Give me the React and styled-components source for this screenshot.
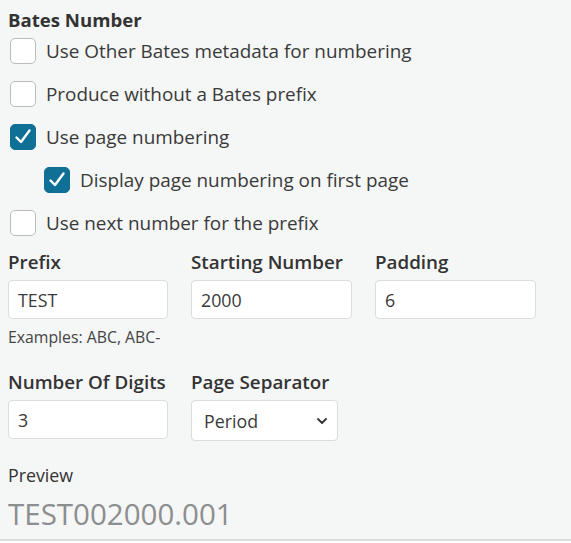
import React from "react";
import styled, { createGlobalStyle } from "styled-components";

const Global = createGlobalStyle`
  html, body { margin: 0; padding: 0; background: #fff; }
  body { font-family: "Open Sans", "Noto Sans", sans-serif; color: #333; }
`;

const Panel = styled.div`
  width: 571px;
  height: 541px;
  box-sizing: border-box;
  background: #f5f6f6;
  border-bottom: 2px solid #dcdede;
  padding: 6px 8px 0 8px;
  display: flex;
  flex-direction: column;
`;

const Heading = styled.div`
  font-size: 18.6px;
  font-weight: 700;
  line-height: 28px;
  color: #333;
`;

const CheckList = styled.div`
  display: flex;
  flex-direction: column;
  gap: 17px;
  margin-top: 4px;
`;

const CheckRow = styled.label`
  display: flex;
  align-items: center;
  gap: 10px;
  padding-left: ${(p) => (p.$indent ? 36 : 2)}px;
  font-size: 18.9px;
  line-height: 26px;
  color: #3a3a3a;
`;

const Box = styled.span`
  width: 26px;
  height: 26px;
  box-sizing: border-box;
  border-radius: 5px;
  flex: none;
  display: flex;
  align-items: center;
  justify-content: center;
  background: ${(p) => (p.$checked ? "#0f6f95" : "#fff")};
  border: 1.5px solid ${(p) => (p.$checked ? "#0f6f95" : "#b9bcbd")};
`;

const Check = ({ checked }) => (
  <Box $checked={checked}>
    {checked && (
      <svg width="20" height="20" viewBox="0 0 20 20">
        <path d="M3.5 10.5 L8 15 L16.5 3.5" fill="none" stroke="#fff" strokeWidth="2.4" strokeLinecap="round" strokeLinejoin="round" />
      </svg>
    )}
  </Box>
);

const FieldGrid = styled.div`
  display: grid;
  grid-template-columns: 160px 161px 161px;
  column-gap: 23px;
  margin-top: ${(p) => p.$mt}px;
`;

const Field = styled.div`
  display: flex;
  flex-direction: column;
`;

const Label = styled.div`
  font-size: ${(p) => (p.$regular ? 17.8 : 18.8)}px;
  font-weight: ${(p) => (p.$regular ? 400 : 600)};
  line-height: 24px;
  color: #333;
  margin-bottom: 6px;
  white-space: nowrap;
`;

const Input = styled.div`
  height: 39px;
  box-sizing: border-box;
  background: #fff;
  border: 1px solid #dadcdd;
  border-radius: 4px;
  padding: 0 9px;
  display: flex;
  align-items: center;
  font-size: 17.8px;
  color: #3a3a3a;
`;

const Select = styled(Input)`
  width: ${(p) => p.$w}px;
  height: 41px;
  justify-content: space-between;
  padding: 0 9px 0 12px;
`;

const Help = styled.div`
  font-size: 15.8px;
  line-height: 20px;
  color: #444;
  margin-top: 8px;
  white-space: nowrap;
`;

const PreviewBlock = styled.div`
  margin-top: 22px;
  display: flex;
  flex-direction: column;
`;

const PreviewValue = styled.div`
  font-size: 29.5px;
  line-height: 36px;
  color: #8c8e8f;
  margin-top: 3px;
`;

export default function App() {
  return (
    <>
      <Global />
      <Panel>
        <Heading>Bates Number</Heading>
        <CheckList>
          <CheckRow><Check checked={false} />Use Other Bates metadata for numbering</CheckRow>
          <CheckRow><Check checked={false} />Produce without a Bates prefix</CheckRow>
          <CheckRow><Check checked />Use page numbering</CheckRow>
          <CheckRow $indent><Check checked />Display page numbering on first page</CheckRow>
          <CheckRow><Check checked={false} />Use next number for the prefix</CheckRow>
        </CheckList>
        <FieldGrid $mt={14}>
          <Field>
            <Label>Prefix</Label>
            <Input>TEST</Input>
            <Help>Examples: ABC, ABC-</Help>
          </Field>
          <Field>
            <Label>Starting Number</Label>
            <Input>2000</Input>
          </Field>
          <Field>
            <Label>Padding</Label>
            <Input>6</Input>
          </Field>
        </FieldGrid>
        <FieldGrid $mt={23}>
          <Field>
            <Label>Number Of Digits</Label>
            <Input>3</Input>
          </Field>
          <Field>
            <Label>Page Separator</Label>
            <Select $w={147}>
              Period
              <svg width="12" height="8" viewBox="0 0 12 8">
                <path d="M2 2 L6 6 L10 2" fill="none" stroke="#333" strokeWidth="1.8" strokeLinecap="round" strokeLinejoin="round" />
              </svg>
            </Select>
          </Field>
        </FieldGrid>
        <PreviewBlock>
          <Label $regular>Preview</Label>
          <PreviewValue>TEST002000.001</PreviewValue>
        </PreviewBlock>
      </Panel>
    </>
  );
}
